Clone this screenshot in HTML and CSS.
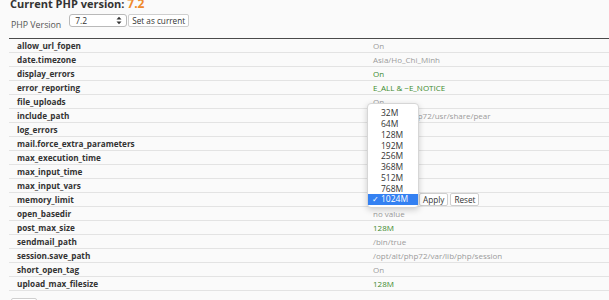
FILE: index.html
```html
<!DOCTYPE html>
<html lang="en">
<head>
    <meta charset="UTF-8">
    <title>PHP Options</title>
    <link rel="stylesheet" href="styles.css">
</head>
<body>
    <div class="page">
        <h3 class="current">Current PHP version: <span class="current-ver">7.2</span></h3>

        <div class="version-form">
            <label class="version-label" for="phpVersion">PHP Version</label>
            <span class="select-wrap">
                <select id="phpVersion" class="select">
                    <option>7.2</option>
                </select>
                <svg class="select-arrows" width="6" height="9" viewBox="0 0 6 9">
                    <path d="M0.5 3.5 L3 0.8 L5.5 3.5 Z M0.5 5.5 L3 8.2 L5.5 5.5 Z" fill="#333"/>
                </svg>
            </span>
            <button class="btn">Set as current</button>
        </div>

        <table class="options">
            <tr><td class="name">allow_url_fopen</td><td class="value">On</td></tr>
            <tr><td class="name">date.timezone</td><td class="value">Asia/Ho_Chi_Minh</td></tr>
            <tr><td class="name">display_errors</td><td class="value green">On</td></tr>
            <tr><td class="name">error_reporting</td><td class="value green">E_ALL &amp; ~E_NOTICE</td></tr>
            <tr><td class="name">file_uploads</td><td class="value">On</td></tr>
            <tr><td class="name">include_path</td><td class="value">.:/opt/alt/php72/usr/share/pear</td></tr>
            <tr><td class="name">log_errors</td><td class="value">On</td></tr>
            <tr><td class="name">mail.force_extra_parameters</td><td class="value">no value</td></tr>
            <tr><td class="name">max_execution_time</td><td class="value">30</td></tr>
            <tr><td class="name">max_input_time</td><td class="value">60</td></tr>
            <tr><td class="name">max_input_vars</td><td class="value">1000</td></tr>
            <tr>
                <td class="name">memory_limit</td>
                <td class="value">
                    <div class="edit">
                        <select class="select small"><option>1024M</option></select>
                        <button class="btn">Apply</button>
                        <button class="btn">Reset</button>
                        <ul class="popup">
                            <li>32M</li>
                            <li>64M</li>
                            <li>128M</li>
                            <li>192M</li>
                            <li>256M</li>
                            <li>368M</li>
                            <li>512M</li>
                            <li>768M</li>
                            <li class="picked"><span class="check">✓</span>1024M</li>
                        </ul>
                    </div>
                </td>
            </tr>
            <tr><td class="name">open_basedir</td><td class="value">no value</td></tr>
            <tr><td class="name">post_max_size</td><td class="value green">128M</td></tr>
            <tr><td class="name">sendmail_path</td><td class="value">/bin/true</td></tr>
            <tr><td class="name">session.save_path</td><td class="value">/opt/alt/php72/var/lib/php/session</td></tr>
            <tr><td class="name">short_open_tag</td><td class="value">On</td></tr>
            <tr><td class="name">upload_max_filesize</td><td class="value green">128M</td></tr>
        </table>

        <button class="btn save">Save</button>
    </div>
</body>
</html>
```

FILE: styles.css
```css
body {
    margin: 0;
    background: #fafafa;
    font-family: "Open Sans", Arial, sans-serif;
    color: #333;
    overflow: hidden;
}
.page {
    padding: 0 0 0 9px;
}
.current {
    margin: -2px 0 0 1px;
    font-size: 11px;
    line-height: 12px;
    font-weight: bold;
    color: #333;
}
.current-ver {
    color: #ef8a2b;
    font-size: 12px;
}
.version-form {
    display: flex;
    align-items: center;
    margin: 3px 0 0 2px;
    height: 14px;
}
.version-label {
    font-size: 8.8px;
    color: #555;
    margin: 9px 8px 0 0;
}
.select-wrap {
    position: relative;
    display: inline-block;
}
.select {
    appearance: none;
    -webkit-appearance: none;
    width: 58px;
    height: 13px;
    padding: 0 0 0 5px;
    border: 1px solid #b9b9b9;
    border-radius: 3px;
    background: #fff;
    font-family: inherit;
    font-size: 8.5px;
    line-height: 11px;
    color: #333;
    display: block;
}
.select-arrows {
    position: absolute;
    right: 5px;
    top: 2px;
}
.btn {
    height: 13px;
    margin: 0 0 0 1px;
    padding: 0 3px;
    border: 1px solid #cfcfcf;
    border-radius: 2px;
    background: #fff;
    font-family: inherit;
    font-size: 8.2px;
    line-height: 11px;
    color: #333;
}
.options {
    margin-top: 11px;
    width: 600px;
    border-collapse: collapse;
    border-top: 1px solid #4a4a4a;
    font-size: 8px;
}
.options td {
    height: 13px;
    padding: 0 0 0 8px;
    border-bottom: 1px solid #e3e3e3;
    line-height: 13px;
    white-space: nowrap;
}
.options .name {
    width: 348px;
    font-weight: bold;
    font-size: 8.2px;
    color: #333;
}
.options .value {
    color: #9a9a9a;
}
.options .green {
    color: #3c8a2e;
}
.edit {
    position: relative;
    display: flex;
    align-items: center;
    height: 13px;
}
.select.small {
    width: 50px;
    margin-left: -6px;
}
.edit .btn {
    margin-left: 2px;
}
.popup {
    position: absolute;
    left: -6px;
    bottom: -2px;
    width: 50px;
    margin: 0;
    padding: 4px 0 2px;
    list-style: none;
    background: #fff;
    border: 1px solid #d6d6d6;
    border-radius: 4px;
    box-shadow: 0 2px 6px rgba(0, 0, 0, 0.18);
}
.popup li {
    position: relative;
    height: 10.75px;
    line-height: 10.75px;
    padding-left: 13px;
    font-size: 8.5px;
    color: #333;
}
.popup li.picked {
    background: #3481f2;
    color: #fff;
}
.check {
    position: absolute;
    left: 4px;
    font-size: 8px;
}
.save {
    margin: 1px 0 0 2px;
    height: 14px;
}
```
